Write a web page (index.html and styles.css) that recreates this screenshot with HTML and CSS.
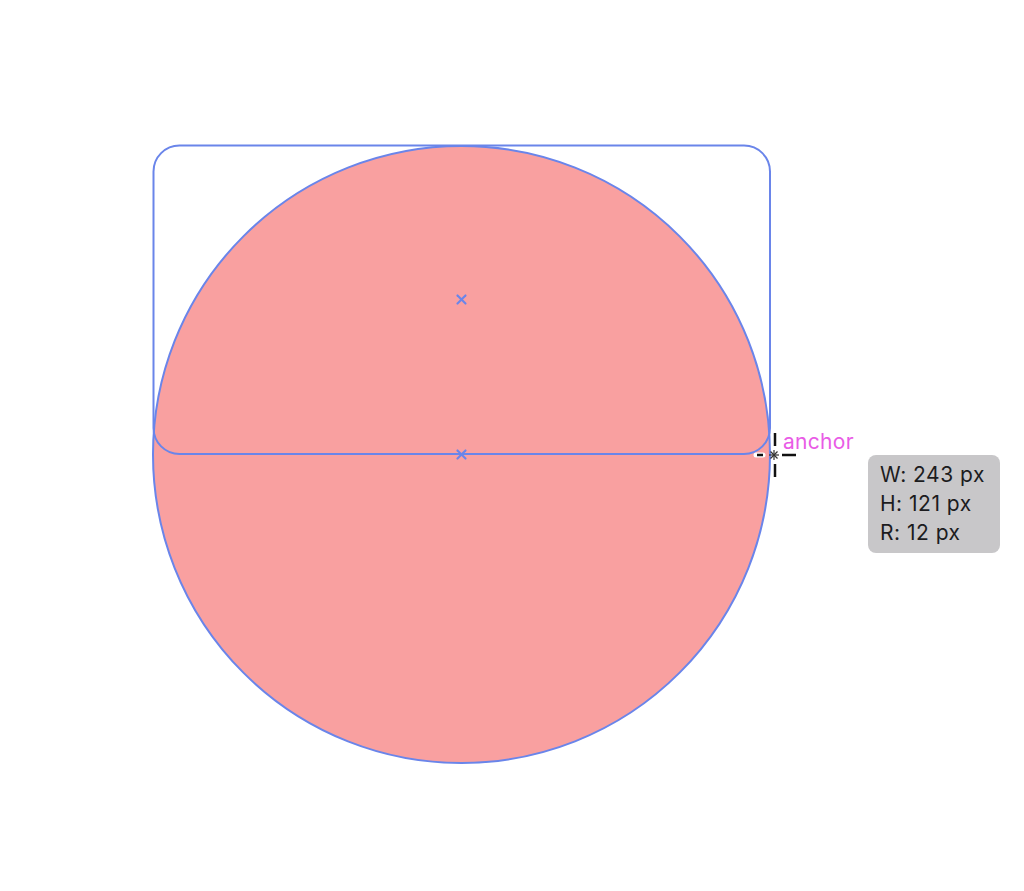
FILE: index.html
```html
<!DOCTYPE html>
<html>
<head>
<meta charset="utf-8">
<link rel="stylesheet" href="styles.css">
</head>
<body>
<div class="canvas">
  <svg class="shapes" width="1024" height="891" viewBox="0 0 1024 891" xmlns="http://www.w3.org/2000/svg">
    <circle cx="461.5" cy="454.5" r="308.5" fill="#f9a0a0" stroke="#6a85ea" stroke-width="2"/>
    <rect x="153.5" y="145.5" width="616.5" height="308.5" rx="26" ry="26" fill="none" stroke="#6a85ea" stroke-width="2"/>
    <g stroke="#6a85ea" stroke-width="2.2" stroke-linecap="round">
      <line x1="457.5" y1="295.5" x2="465.5" y2="303.5"/>
      <line x1="465.5" y1="295.5" x2="457.5" y2="303.5"/>
      <line x1="457.5" y1="450.5" x2="465.5" y2="458.5"/>
      <line x1="465.5" y1="450.5" x2="457.5" y2="458.5"/>
    </g>
    <g class="cursor">
      <g stroke="#ffffff" stroke-width="5" stroke-linecap="round">
        <line x1="756" y1="455" x2="763" y2="455"/>
        <line x1="782" y1="455" x2="796" y2="455"/>
        <line x1="775" y1="433" x2="775" y2="446"/>
        <line x1="775" y1="464" x2="775" y2="477"/>
      </g>
      <g stroke="#111111" stroke-width="2.5">
        <line x1="757" y1="455" x2="763" y2="455"/>
        <line x1="782" y1="455" x2="796" y2="455"/>
        <line x1="775" y1="433" x2="775" y2="446"/>
        <line x1="775" y1="464" x2="775" y2="477"/>
      </g>
      <g stroke="#333333" stroke-width="1.2">
        <line x1="769" y1="455" x2="779" y2="455"/>
        <line x1="774" y1="450" x2="774" y2="460"/>
        <line x1="770.5" y1="451.5" x2="777.5" y2="458.5"/>
        <line x1="777.5" y1="451.5" x2="770.5" y2="458.5"/>
      </g>
    </g>
  </svg>
  <div class="anchor-label">anchor</div>
  <div class="tooltip">
    <div class="tip-line">W: 243 px</div>
    <div class="tip-line">H: 121 px</div>
    <div class="tip-line">R: 12 px</div>
  </div>
</div>
</body>
</html>
```
FILE: styles.css
```css
html, body {
  margin: 0;
  padding: 0;
  background: #ffffff;
}
.canvas {
  position: relative;
  width: 1024px;
  height: 891px;
  overflow: hidden;
  font-family: "Inter", "Liberation Sans", sans-serif;
}
.shapes {
  position: absolute;
  left: 0;
  top: 0;
}
.anchor-label {
  position: absolute;
  left: 783px;
  top: 429px;
  font-size: 21px;
  line-height: 26px;
  letter-spacing: 0.3px;
  color: #e95be6;
}
.tooltip {
  position: absolute;
  left: 868px;
  top: 455px;
  width: 132px;
  height: 98px;
  box-sizing: border-box;
  padding: 5px 0 0 12px;
  background: #c8c7c9;
  border-radius: 8px;
  color: #1c1c1e;
  font-size: 21px;
  letter-spacing: 0.5px;
  display: flex;
  flex-direction: column;
}
.tip-line {
  line-height: 29px;
  white-space: nowrap;
}
```
